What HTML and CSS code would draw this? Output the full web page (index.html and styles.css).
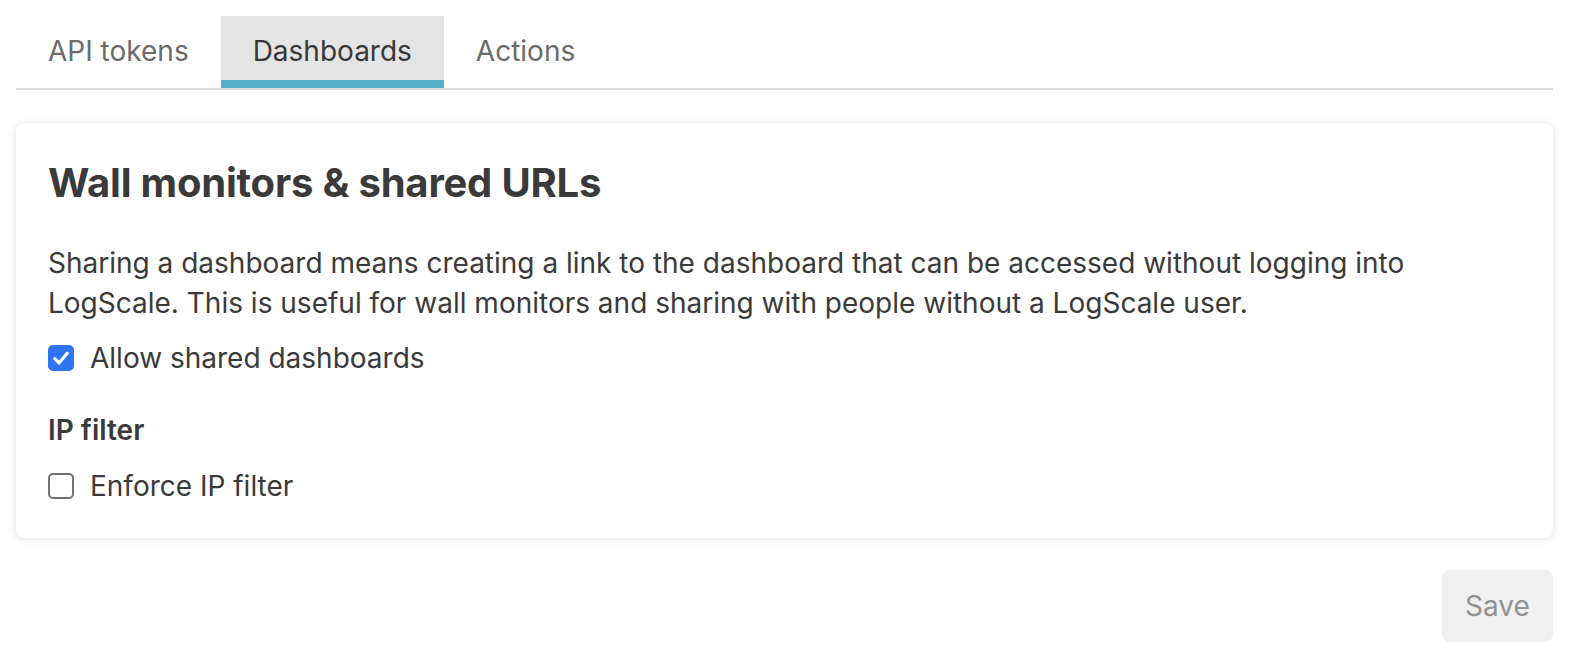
FILE: index.html
```html
<!DOCTYPE html>
<html lang="en">
<head>
<meta charset="utf-8">
<title>Dashboards settings</title>
<link rel="stylesheet" href="styles.css">
</head>
<body>
<div class="page">
  <nav class="tabs">
    <div class="tab">API tokens</div>
    <div class="tab active">Dashboards</div>
    <div class="tab">Actions</div>
  </nav>
  <section class="card">
    <h2 class="title">Wall monitors &amp; shared URLs</h2>
    <p class="desc">Sharing a dashboard means creating a link to the dashboard that can be accessed without logging into LogScale. This is useful for wall monitors and sharing with people without a LogScale user.</p>
    <label class="check-row first">
      <span class="box checked">
        <svg viewBox="0 0 26 26" width="26" height="26"><path d="M6.8 13.6l4.2 4.4 8.2-9.8" fill="none" stroke="#fff" stroke-width="3.2" stroke-linecap="round" stroke-linejoin="round"/></svg>
      </span>
      <span class="label">Allow shared dashboards</span>
    </label>
    <h3 class="subtitle">IP filter</h3>
    <label class="check-row second">
      <span class="box"></span>
      <span class="label">Enforce IP filter</span>
    </label>
  </section>
  <div class="actions">
    <button class="save" type="button">Save</button>
  </div>
</div>
</body>
</html>
```
FILE: styles.css
```css
* { box-sizing: border-box; }
html, body { margin: 0; padding: 0; background: #fff; }
body {
  font-family: Inter, "Noto Sans", "Liberation Sans", sans-serif;
  color: #3a3a3a;
}
.page {
  padding: 16px 23px 0 16px;
}
.tabs {
  display: flex;
  border-bottom: 2px solid #dcdcdc;
}
.tab {
  padding: 18px 32px 12px;
  font-size: 28px;
  line-height: 34px;
  color: #6b6b6b;
  border-bottom: 8px solid transparent;
}
.tab.active {
  background: #e4e4e4;
  color: #383838;
  border-bottom-color: #56afc8;
}
.card {
  margin-top: 33px;
  background: #fff;
  border-radius: 8px;
  box-shadow: 0 1px 8px rgba(0,0,0,0.12), 0 0 1px rgba(0,0,0,0.06);
  padding: 32px;
  display: flex;
  flex-direction: column;
}
.title {
  margin: 0;
  font-size: 40px;
  line-height: 56px;
  font-weight: 700;
  letter-spacing: -0.2px;
  color: #3a3a3a;
}
.desc {
  margin: 32px 0 0;
  font-size: 28px;
  line-height: 40px;
  color: #3a3a3a;
}
.check-row {
  display: flex;
  align-items: center;
  gap: 16px;
  height: 40px;
  font-size: 28px;
  color: #3a3a3a;
}
.check-row.first { margin-top: 15px; }
.check-row.second { margin-top: 16px; }
.box {
  width: 26px;
  height: 26px;
  border-radius: 5px;
  border: 2px solid #727272;
  background: #fff;
  display: flex;
  flex: none;
}
.box.checked {
  background: #2f74f5;
  border-color: #2f74f5;
}
.box.checked svg { margin: -2px; }
.subtitle {
  margin: 32px 0 0;
  font-size: 28px;
  line-height: 40px;
  font-weight: 600;
  color: #3a3a3a;
}
.actions {
  display: flex;
  justify-content: flex-end;
  margin-top: 32px;
}
.save {
  width: 111px;
  height: 72px;
  border: none;
  border-radius: 8px;
  background: #f0f0f0;
  color: #929292;
  font-family: Inter, "Noto Sans", sans-serif;
  font-size: 28px;
}
```
